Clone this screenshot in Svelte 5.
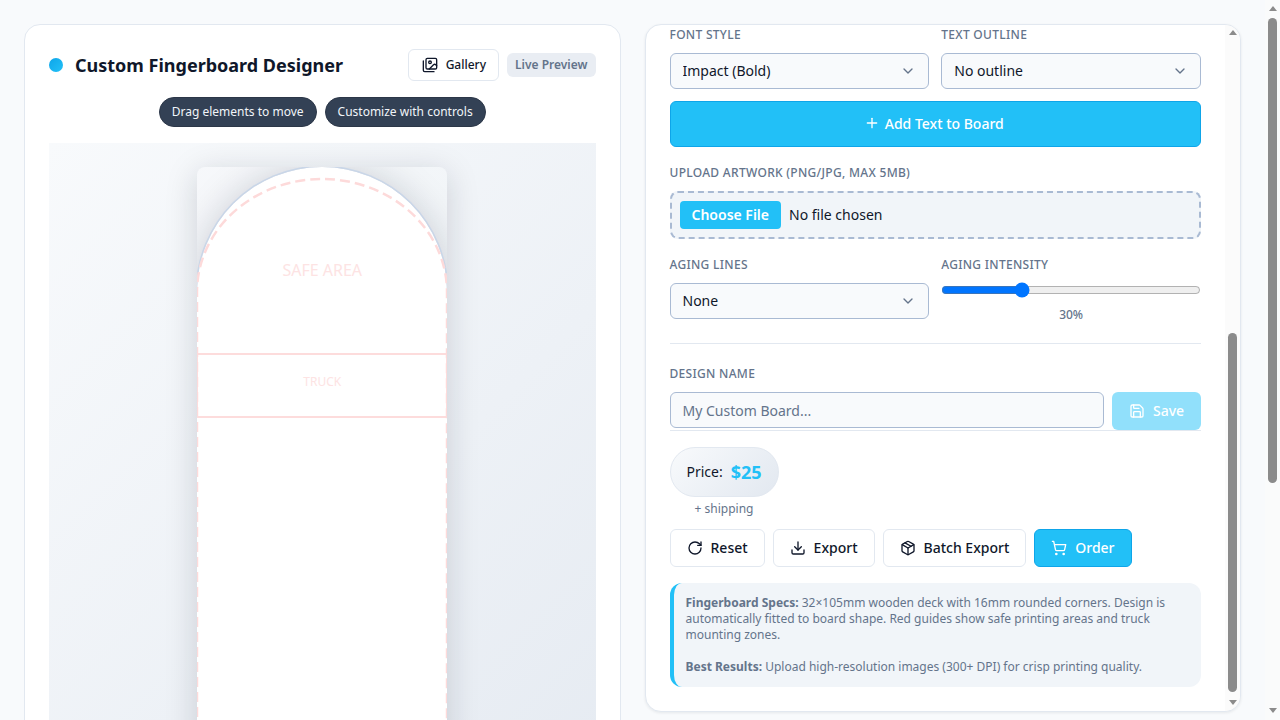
<script lang="ts">
  // static readouts of the page and panel scroll positions
  const pageBar = { top: 18, height: 465 }
  const panelBar = { top: 308, height: 359 }
</script>

{#snippet chevron()}
  <svg class="chevron" width="16" height="16" viewBox="0 0 24 24" fill="none" stroke="currentColor" stroke-width="2" stroke-linecap="round" stroke-linejoin="round"><path d="m6 9 6 6 6-6"/></svg>
{/snippet}

{#snippet scrollbar(kind: string, bar: { top: number; height: number })}
  <div class="scrollbar {kind}">
    <span class="arrow up"></span>
    <span class="thumb" style="top: {bar.top}px; height: {bar.height}px"></span>
    <span class="arrow down"></span>
  </div>
{/snippet}

<main class="layout">
  <section class="panel preview">
    <header class="head">
      <span class="dot"></span>
      <h1>Custom Fingerboard Designer</h1>
      <button class="btn small">
        <svg width="16" height="16" viewBox="0 0 24 24" fill="none" stroke="currentColor" stroke-width="2" stroke-linecap="round" stroke-linejoin="round"><path d="M18 22H4a2 2 0 0 1-2-2V6"/><path d="m22 13-1.296-1.296a2.41 2.41 0 0 0-3.408 0L11 18"/><circle cx="12" cy="8" r="2"/><rect width="16" height="16" x="6" y="2" rx="2"/></svg>
        Gallery
      </button>
      <span class="badge">Live Preview</span>
    </header>

    <div class="hints">
      <span class="hint">Drag elements to move</span>
      <span class="hint">Customize with controls</span>
    </div>

    <div class="stage">
      <div class="board-wrap">
        <div class="board">
          <div class="safe-label">SAFE AREA</div>
          <div class="truck">TRUCK</div>
        </div>
        <svg class="guide" width="250" height="820" viewBox="0 0 250 820" fill="none"><path d="M0 820V125A125 113 0 0 1 250 125V820" stroke="#fddada" stroke-width="2.500" stroke-dasharray="10 5"/></svg>
      </div>
    </div>
  </section>

  <section class="panel controls">
    <div class="two">
      <div>
        <div class="label">Font Style</div>
        <div class="select-wrap">
          <select><option>Impact (Bold)</option></select>
          {@render chevron()}
        </div>
      </div>
      <div>
        <div class="label">Text Outline</div>
        <div class="select-wrap">
          <select><option>No outline</option></select>
          {@render chevron()}
        </div>
      </div>
    </div>

    <button class="add">
      <svg width="16" height="16" viewBox="0 0 24 24" fill="none" stroke="currentColor" stroke-width="2" stroke-linecap="round" stroke-linejoin="round"><path d="M5 12h14"/><path d="M12 5v14"/></svg>
      Add Text to Board
    </button>

    <div class="label upload-label">Upload Artwork (PNG/JPG, Max 5MB)</div>
    <input class="file" type="file" accept="image/png,image/jpeg" />

    <div class="two aging">
      <div>
        <div class="label">Aging Lines</div>
        <div class="select-wrap">
          <select><option>None</option></select>
          {@render chevron()}
        </div>
      </div>
      <div>
        <div class="label">Aging Intensity</div>
        <input class="range" type="range" min="0" max="100" value="30" />
        <div class="range-value">30%</div>
      </div>
    </div>

    <hr />

    <div class="label">Design Name</div>
    <div class="name-row">
      <input class="name" type="text" placeholder="My Custom Board..." />
      <button class="save" disabled>
        <svg width="16" height="16" viewBox="0 0 24 24" fill="none" stroke="currentColor" stroke-width="2" stroke-linecap="round" stroke-linejoin="round"><path d="M15.200 3a2 2 0 0 1 1.400.6l3.800 3.800a2 2 0 0 1 .6 1.400V19a2 2 0 0 1-2 2H5a2 2 0 0 1-2-2V5a2 2 0 0 1 2-2z"/><path d="M17 21v-7a1 1 0 0 0-1-1H8a1 1 0 0 0-1 1v7"/><path d="M7 3v4a1 1 0 0 0 1 1h7"/></svg>
        <span class="raised">Save</span>
      </button>
    </div>

    <div class="price-block">
      <div class="price"><span class="raised">Price:</span><strong>$25</strong></div>
      <div class="shipping">+ shipping</div>
    </div>

    <div class="actions">
      <button class="btn">
        <svg width="16" height="16" viewBox="0 0 24 24" fill="none" stroke="currentColor" stroke-width="2" stroke-linecap="round" stroke-linejoin="round"><path d="M21 12a9 9 0 1 1-9-9c2.520 0 4.930 1 6.740 2.740L21 8"/><path d="M21 3v5h-5"/></svg>
        <span class="raised">Reset</span>
      </button>
      <button class="btn">
        <svg width="16" height="16" viewBox="0 0 24 24" fill="none" stroke="currentColor" stroke-width="2" stroke-linecap="round" stroke-linejoin="round"><path d="M21 15v4a2 2 0 0 1-2 2H5a2 2 0 0 1-2-2v-4"/><polyline points="7 10 12 15 17 10"/><line x1="12" x2="12" y1="15" y2="3"/></svg>
        <span class="raised">Export</span>
      </button>
      <button class="btn">
        <svg width="16" height="16" viewBox="0 0 24 24" fill="none" stroke="currentColor" stroke-width="2" stroke-linecap="round" stroke-linejoin="round"><path d="M21 8a2 2 0 0 0-1-1.730l-7-4a2 2 0 0 0-2 0l-7 4A2 2 0 0 0 3 8v8a2 2 0 0 0 1 1.730l7 4a2 2 0 0 0 2 0l7-4A2 2 0 0 0 21 16Z"/><path d="m3.300 7 8.700 5 8.700-5"/><path d="M12 22V12"/><path d="m7.500 4.270 9 5.150"/></svg>
        <span class="raised">Batch Export</span>
      </button>
      <button class="btn order">
        <svg width="16" height="16" viewBox="0 0 24 24" fill="none" stroke="currentColor" stroke-width="2" stroke-linecap="round" stroke-linejoin="round"><circle cx="8" cy="21" r="1"/><circle cx="19" cy="21" r="1"/><path d="M2.050 2.050h2l2.660 12.420a2 2 0 0 0 2 1.580h9.780a2 2 0 0 0 1.950-1.570l1.650-7.430H5.120"/></svg>
        <span class="raised">Order</span>
      </button>
    </div>

    <div class="info">
      <p><b>Fingerboard Specs:</b> 32×105mm wooden deck with 16mm rounded corners. Design is automatically fitted to board shape. Red guides show safe printing areas and truck mounting zones.</p>
      <p><b>Best Results:</b> Upload high-resolution images (300+ DPI) for crisp printing quality.</p>
    </div>

    {@render scrollbar('in-panel', panelBar)}
  </section>
</main>

{@render scrollbar('in-page', pageBar)}

<style>
  :global(html) {
    scrollbar-width: none;
  }
  :global(body) {
    background: #f8fafc;
    font-family: "Noto Sans", sans-serif;
    color: #0f172a;
  }
  .layout {
    display: grid;
    grid-template-columns: 1fr 1fr;
    gap: 24px;
    padding: 24px 39px 24px 24px;
    align-items: start;
  }
  .panel {
    background: #fff;
    border: 1px solid #e2e8f0;
    border-radius: 16px;
    padding: 24px;
  }
  .controls {
    position: relative;
    height: calc(100vh - 32px);
    box-sizing: border-box;
    padding-right: 39px;
    display: flex;
    flex-direction: column;
    justify-content: flex-end;
    overflow: hidden;
    box-shadow: 0 1px 3px rgba(15, 23, 42, 0.08);
  }
  .raised {
    position: relative;
    top: -1px;
  }

  /* scrollbars */
  .scrollbar {
    width: 15px;
    box-sizing: border-box;
    display: flex;
    flex-direction: column;
    justify-content: space-between;
    align-items: center;
    background: rgba(250, 250, 250, 0.85);
  }
  .scrollbar.in-page {
    position: fixed;
    top: 0;
    right: 0;
    bottom: 0;
    padding: 6px 0 7px;
  }
  .scrollbar.in-panel {
    position: absolute;
    top: 0;
    right: 0;
    bottom: 0;
    padding: 5px 0 6px;
  }
  .thumb {
    position: absolute;
    left: 3px;
    width: 9px;
    border-radius: 5px;
    background: #8b8b8b;
  }
  .arrow {
    width: 0;
    height: 0;
    border-left: 4.500px solid transparent;
    border-right: 4.500px solid transparent;
  }
  .arrow.up {
    border-bottom: 5px solid #8b8b8b;
  }
  .arrow.down {
    border-top: 5px solid #8b8b8b;
  }

  /* preview column */
  .head {
    display: flex;
    align-items: center;
    height: 32px;
  }
  .dot {
    width: 14px;
    height: 14px;
    border-radius: 50%;
    background: linear-gradient(135deg, #0ea5e9, #22c1f8);
    margin-right: 12px;
  }
  h1 {
    margin: 0 auto 0 0;
    font-size: 18px;
    font-weight: 700;
    line-height: 24px;
  }
  .badge {
    margin-left: 8px;
    height: 24px;
    box-sizing: border-box;
    padding: 0 8px 1px;
    display: flex;
    align-items: center;
    border-radius: 6px;
    background: #e9edf3;
    color: #64748b;
    font-size: 12px;
    font-weight: 600;
  }
  .hints {
    display: flex;
    justify-content: center;
    gap: 8px;
    margin: 16px 0;
  }
  .hint {
    height: 30px;
    box-sizing: border-box;
    padding: 0 12px 2px;
    display: flex;
    align-items: center;
    border-radius: 15px;
    border: 1px solid #2c3748;
    background: #334155;
    color: #f1f5f9;
    font-size: 12px;
  }
  .stage {
    padding: 24px 0;
    display: flex;
    justify-content: center;
    background: linear-gradient(135deg, #f8fafc, #e2e8f0);
  }
  .board-wrap {
    position: relative;
    width: 250px;
    height: 820px;
    border-radius: 8px;
    overflow: hidden;
    background: rgba(255, 255, 255, 0.1);
    box-shadow: 0 6px 32px rgba(15, 23, 42, 0.17);
  }
  .board {
    height: 100%;
    border-radius: 125px 125px 0 0;
    background: #fff;
    overflow: hidden;
  }
  .board-wrap::before {
    content: "";
    position: absolute;
    inset: 0;
    border-radius: 125px 125px 0 0;
    box-shadow: 0 0 0 1.500px #c9d6e8, 0 0 36px rgba(15, 23, 42, 0.18);
  }
  .guide {
    position: absolute;
    inset: 0;
    pointer-events: none;
  }
  .safe-label {
    padding-top: 90px;
    text-align: center;
    font-size: 16px;
    line-height: 26px;
    color: #fde3e3;
  }
  .truck {
    margin-top: 70px;
    height: 65px;
    box-sizing: border-box;
    padding-bottom: 8px;
    display: flex;
    align-items: center;
    justify-content: center;
    border: solid #fddcdc;
    border-width: 2px 1px;
    font-size: 12px;
    color: #fde3e3;
  }

  /* controls column */
  .label {
    font-size: 12px;
    line-height: 18px;
    padding-top: 1px;
    margin-bottom: 9px;
    font-weight: 500;
    letter-spacing: 0.3px;
    color: #64748b;
    text-transform: uppercase;
  }
  .two {
    display: grid;
    grid-template-columns: 1fr 1fr;
    gap: 12px;
    flex-shrink: 0;
  }
  .select-wrap {
    position: relative;
  }
  select {
    display: block;
    width: 100%;
    height: 36px;
    padding: 0 12px 2px;
    appearance: none;
    border: 1px solid #a9bad3;
    border-radius: 6px;
    background: #f8fafc;
    font: 14px "Noto Sans", sans-serif;
    color: #0f172a;
  }
  .chevron {
    position: absolute;
    right: 13px;
    top: 10px;
    color: #64748b;
    pointer-events: none;
  }
  .add {
    width: 100%;
    height: 46px;
    flex-shrink: 0;
    margin-top: 12px;
    padding: 0 3px 2px 0;
    display: flex;
    align-items: center;
    justify-content: center;
    gap: 5px;
    border: 1px solid #0ea5e9;
    border-radius: 6px;
    background: #22c0f7;
    color: #fff;
    font: 500 14px "Noto Sans", sans-serif;
  }
  .upload-label {
    margin-top: 16px;
  }
  .file {
    display: block;
    width: 100%;
    height: 48px;
    flex-shrink: 0;
    box-sizing: border-box;
    padding: 7px 8px 9px;
    border: 2px dashed #a9bad3;
    border-radius: 8px;
    background: #f1f5f9;
    font: 14px "Noto Sans", sans-serif;
    color: #0f172a;
  }
  .file::file-selector-button {
    height: 28px;
    margin: 1px 8px 0 0;
    padding: 0 12px 2px;
    border: none;
    border-radius: 4px;
    background: #22c0f7;
    color: #fff;
    font: 600 14px "Noto Sans", sans-serif;
  }
  .aging {
    margin-top: 16px;
  }
  .range {
    display: block;
    width: 100%;
    margin: -1px 0 0;
    height: 16px;
  }
  .range-value {
    margin-top: 8px;
    text-align: center;
    font-size: 12px;
    line-height: 18px;
    font-weight: 500;
    color: #64748b;
  }
  hr {
    width: 100%;
    margin: 19px 0 20px;
    border: none;
    border-top: 1px solid #e2e8f0;
  }
  .name-row {
    display: flex;
    gap: 8px;
    align-items: flex-start;
    flex-shrink: 0;
    border-bottom: 1px solid #e2e8f0;
  }
  .name {
    flex: 1;
    min-width: 0;
    height: 36px;
    box-sizing: border-box;
    padding: 0 12px;
    border: 1px solid #a9bad3;
    border-radius: 6px;
    background: #f8fafc;
    font: 14px "Noto Sans", sans-serif;
    color: #0f172a;
  }
  .name::placeholder {
    color: #64748b;
  }
  .save {
    width: 89px;
    height: 38px;
    display: flex;
    align-items: center;
    justify-content: center;
    gap: 8px;
    border: none;
    border-radius: 6px;
    background: #91e0fb;
    color: #fff;
    font: 500 14px "Noto Sans", sans-serif;
  }
  .price-block {
    width: 109px;
    margin-top: 16px;
    flex-shrink: 0;
    display: flex;
    flex-direction: column;
    align-items: center;
  }
  .price {
    width: 100%;
    height: 50px;
    box-sizing: border-box;
    display: flex;
    align-items: center;
    justify-content: center;
    gap: 8px;
    border-radius: 25px;
    border: 1px solid #e2e8f0;
    background: linear-gradient(135deg, #f8fafc, #e2e8f0);
    font-size: 14px;
  }
  .price strong {
    font-size: 18px;
    color: #22c0f7;
  }
  .shipping {
    margin-top: 3px;
    font-size: 12px;
    line-height: 18px;
    color: #64748b;
  }
  .actions {
    display: flex;
    gap: 8px;
    margin-top: 11px;
    flex-shrink: 0;
  }
  .btn {
    height: 38px;
    padding: 0 16px;
    display: inline-flex;
    align-items: center;
    gap: 8px;
    border: 1px solid #e2e8f0;
    border-radius: 6px;
    background: #fff;
    color: #0f172a;
    font: 500 14px "Noto Sans", sans-serif;
  }
  .btn.small {
    height: 32px;
    padding: 0 12px 1px 13px;
    font-size: 12px;
  }
  .btn.order {
    background: #22c0f7;
    border-color: #0ea5e9;
    color: #fff;
  }
  .info {
    margin-top: 16px;
    flex-shrink: 0;
    padding: 12px;
    border-left: 4px solid #22c0f7;
    border-radius: 12px;
    background: #f1f5f9;
    font-size: 12px;
    line-height: 16px;
    color: #64748b;
  }
  .info p {
    margin: 0 0 16px;
  }
  .info p:last-child {
    margin-bottom: 0;
  }
</style>
